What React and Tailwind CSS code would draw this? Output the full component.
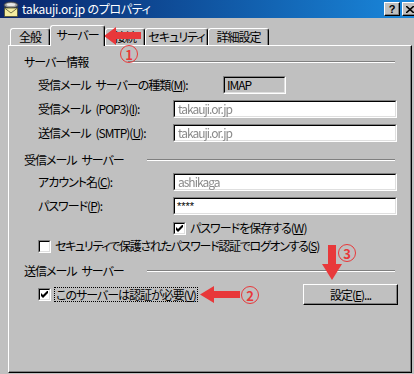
import React from 'react';

const SP = '\u2002';

function Sunken({ className = '', inner = 'bg-white', children }) {
  return (
    <div className={`border border-t-[#808080] border-l-[#808080] border-r-white border-b-white ${className}`}>
      <div className={`h-full border border-t-black border-l-black border-r-[#dfdfdf] border-b-[#dfdfdf] flex items-center ${inner}`}>
        {children}
      </div>
    </div>
  );
}

function Check({ checked }) {
  return (
    <Sunken className="w-[13px] h-[13px] shrink-0" inner="bg-white justify-center">
      {checked && (
        <svg width="7" height="7" viewBox="0 0 7 7">
          <path d="M0 2 L2 4 L7 -1 V2 L2 7 L0 5 Z" fill="#000" />
        </svg>
      )}
    </Sunken>
  );
}

function Group({ title, w, className = '' }) {
  return (
    <div className={`flex items-center h-[14px] ${className}`}>
      <span className={`${w} shrink-0 whitespace-nowrap`}>{title}</span>
      <div className="flex-1 mr-[2px] h-[2px] border-t border-t-[#808080] border-b border-b-white" />
    </div>
  );
}

function Tab({ label, w, active }) {
  return (
    <div
      className={`${w} shrink-0 whitespace-nowrap flex justify-center items-center bg-[#c0c0c0] border-l border-t border-r border-l-white border-t-white border-r-black rounded-t-[3px] shadow-[inset_-1px_0_0_#808080] ${
        active ? 'h-[21px] relative z-10 -mb-px pb-[2px]' : 'h-[17px]'
      }`}
    >
      {label}
    </div>
  );
}

function Acc({ children }) {
  return <span className="underline underline-offset-[1px]">{children}</span>;
}

function Circled({ n, className }) {
  return (
    <div className={`absolute w-[18px] h-[18px] rounded-full border border-[#e8383a] text-[#e8383a] font-bold text-[13px] leading-none flex items-center justify-center ${className}`}>
      {n}
    </div>
  );
}

function MailIcon() {
  return (
    <svg width="16" height="16" viewBox="0 0 16 16">
      <ellipse cx="8" cy="4" rx="7" ry="3" fill="#9a9a9a" stroke="#404040" strokeWidth="0.8" />
      <ellipse cx="8" cy="3.5" rx="4.5" ry="1.6" fill="#e8e8e8" />
      <rect x="1.5" y="7" width="13" height="8.5" fill="#f4eca0" stroke="#505030" strokeWidth="0.8" />
      <path d="M1.5 7 L8 12 L14.5 7" fill="none" stroke="#505030" strokeWidth="0.8" />
    </svg>
  );
}

export default function App() {
  return (
    <div className="w-[414px] h-[374px] bg-[#c0c0c0] relative overflow-hidden text-[12px] leading-[14px] text-black font-['Noto_Sans_CJK_JP',sans-serif] [font-feature-settings:'palt']">
      {/* タイトルバー */}
      <div className="h-[18px] flex items-center bg-linear-to-r from-[#0a246a] to-[#1a88dc] text-white">
        <div className="ml-[3px] mr-[3px]">
          <MailIcon />
        </div>
        <span className="tracking-[-0.3px]">takauji.or.jp のプロパティ</span>
        <div className="ml-auto flex gap-[2px] mr-[-4px]">
          <div className="w-[16px] h-[14px] bg-[#c0c0c0] border border-t-white border-l-white border-r-black border-b-black shadow-[inset_-1px_-1px_0_#808080] flex items-center justify-center text-black font-bold text-[11px] font-['Liberation_Sans',sans-serif]">
            ?
          </div>
          <div className="w-[16px] h-[14px] bg-[#c0c0c0] border border-t-white border-l-white border-r-black border-b-black shadow-[inset_-1px_-1px_0_#808080] flex items-center justify-center">
            <svg width="8" height="7" viewBox="0 0 8 7">
              <path d="M0 0 L8 7 M8 0 L0 7" stroke="#000" strokeWidth="1.6" />
            </svg>
          </div>
        </div>
      </div>

      <div className="pl-[8px] pt-[7px] tracking-[-1px]">
        {/* タブ */}
        <div className="flex items-end h-[20px] pl-[2px]">
          <Tab label="全般" w="w-[40px]" />
          <Tab label="サーバー" w="w-[55px]" active />
          <Tab label="接続" w="w-[40px]" />
          <Tab label="セキュリティ" w="w-[63px]" />
          <Tab label="詳細設定" w="w-[61px]" />
        </div>

        {/* パネル */}
        <div className="w-[404px] h-[328px] border border-l-white border-t-white border-r-black border-b-black shadow-[inset_-1px_-1px_0_#808080] pl-[15px] pr-[14px] flex flex-col">
          <Group title="サーバー情報" w="w-[104px]" className="mt-[9px]" />

          <div className="mt-[7px] h-[18px] flex items-center pl-[14px]">
            <span className="w-[135px] shrink-0 whitespace-nowrap">
              受信メール{SP}サーバーの種類(<Acc>M</Acc>):
            </span>
            <Sunken className="ml-[50px] w-[63px] h-[18px]" inner="bg-[#c0c0c0] pl-[2px]">
              IMAP
            </Sunken>
          </div>

          <div className="mt-[6px] h-[18px] flex items-center pl-[14px]">
            <span className="w-[135px] shrink-0 whitespace-nowrap">
              受信メール{SP}(POP3)(<Acc>I</Acc>):
            </span>
            <Sunken className="flex-1 h-[18px]" inner="bg-white pl-[3px]">
              <span className="text-[#8a8a8a] blur-[0.7px]">takauji.or.jp</span>
            </Sunken>
          </div>

          <div className="mt-[6px] h-[18px] flex items-center pl-[14px]">
            <span className="w-[135px] shrink-0 whitespace-nowrap">
              送信メール{SP}(SMTP)(<Acc>U</Acc>):
            </span>
            <Sunken className="flex-1 h-[18px]" inner="bg-white pl-[3px]">
              <span className="text-[#8a8a8a] blur-[0.7px]">takauji.or.jp</span>
            </Sunken>
          </div>

          <Group title={`受信メール${SP}サーバー`} w="w-[123px]" className="mt-[11px]" />

          <div className="mt-[6px] h-[18px] flex items-center pl-[14px]">
            <span className="w-[135px] shrink-0 whitespace-nowrap">
              アカウント名(<Acc>C</Acc>):
            </span>
            <Sunken className="flex-1 h-[18px]" inner="bg-white pl-[3px]">
              <span className="text-[#8a8a8a] blur-[0.7px]">ashikaga</span>
            </Sunken>
          </div>

          <div className="mt-[6px] h-[18px] flex items-center pl-[14px]">
            <span className="w-[135px] shrink-0 whitespace-nowrap">
              パスワード(<Acc>P</Acc>):
            </span>
            <Sunken className="flex-1 h-[18px]" inner="bg-white pl-[2px]">
              <span className="font-['Liberation_Sans',sans-serif] text-[11px] tracking-normal">****</span>
            </Sunken>
          </div>

          <div className="mt-[6px] h-[14px] flex items-center pl-[149px] gap-[4px]">
            <Check checked />
            <span className="whitespace-nowrap">
              パスワードを保存する(<Acc>W</Acc>)
            </span>
          </div>

          <div className="mt-[4px] h-[14px] flex items-center pl-[14px] gap-[4px]">
            <Check />
            <span className="whitespace-nowrap tracking-[-1.3px]">
              セキュリティで保護されたパスワード認証でログオンする(<Acc>S</Acc>)
            </span>
          </div>

          <Group title={`送信メール${SP}サーバー`} w="w-[123px]" className="mt-[11px]" />

          <div className="mt-[6px] h-[21px] flex items-center pl-[14px]">
            <Check checked />
            <span className="ml-[3px] px-px border border-dotted border-black whitespace-nowrap leading-[13px]">
              このサーバーは認証が必要(<Acc>V</Acc>)
            </span>
            <button className="ml-auto mr-[-1px] w-[95px] h-[21px] bg-[#c0c0c0] border border-t-white border-l-white border-r-black border-b-black shadow-[inset_-1px_-1px_0_#808080] flex items-center justify-center">
              設定(<Acc>E</Acc>)...
            </button>
          </div>
        </div>
      </div>

      {/* 注釈の矢印 */}
      <svg className="absolute left-[104px] top-[27px]" width="37" height="18" viewBox="0 0 37 18">
        <polygon points="0,9 12,0 12,5 37,5 37,12 12,12 12,18" fill="#e8383a" />
      </svg>
      <Circled n="1" className="left-[120px] top-[45px]" />

      <svg className="absolute left-[200px] top-[286px]" width="40" height="17" viewBox="0 0 40 17">
        <polygon points="0,8.5 14,0 14,5 40,5 40,12 14,12 14,17" fill="#e8383a" />
      </svg>
      <Circled n="2" className="left-[241px] top-[286px]" />

      <svg className="absolute left-[322px] top-[245px]" width="20" height="35" viewBox="0 0 20 35">
        <polygon points="6,0 14,0 14,19 20,19 10,35 0,19 6,19" fill="#e8383a" />
      </svg>
      <Circled n="3" className="left-[338px] top-[244px]" />
    </div>
  );
}
